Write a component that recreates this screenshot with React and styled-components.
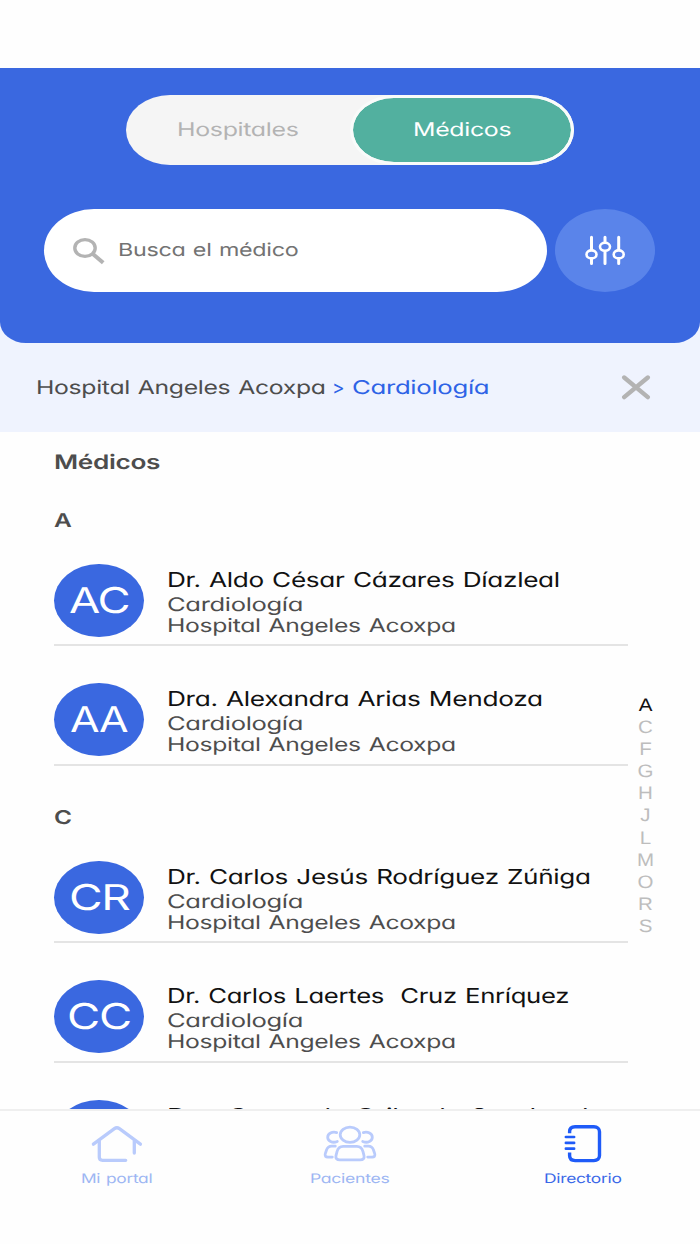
import React, { useLayoutEffect, useRef, useState } from 'react';
import styled, { createGlobalStyle } from 'styled-components';

const sections = [
	{
		letter: 'A',
		doctors: [
			{ initials: 'AC', iw: 60, name: 'Dr. Aldo César Cázares Díazleal', width: 393 },
			{ initials: 'AA', iw: 58, name: 'Dra. Alexandra Arias Mendoza', width: 376 },
		],
	},
	{
		letter: 'C',
		doctors: [
			{ initials: 'CR', iw: 61, name: 'Dr. Carlos Jesús Rodríguez Zúñiga', width: 424 },
			{ initials: 'CC', iw: 64, name: 'Dr. Carlos Laertes\u00a0 Cruz Enríquez', width: 402 },
			{ initials: 'CO', iw: 64, name: 'Dra. Consuelo Orihuela Sandoval', width: 421 },
		],
	},
];

const letters = ['A', 'C', 'F', 'G', 'H', 'J', 'L', 'M', 'O', 'R', 'S'];

// Stretches one line of text so that it fills the given width
function Fit({ width, children }) {
	const ref = useRef(null);
	const [scale, setScale] = useState(1);

	useLayoutEffect(() => {
		setScale(width / ref.current.offsetWidth);
	}, [width, children]);

	return (
		<FitBox style={{ width }}>
			<FitText ref={ref} style={{ transform: `scaleX(${scale})` }}>
				{children}
			</FitText>
		</FitBox>
	);
}

function SearchIcon() {
	return (
		<svg width='34' height='28' viewBox='72 236 34 28' fill='none' stroke='#b3b3b3'>
			<ellipse cx='85' cy='247' rx='10.2' ry='8.4' strokeWidth='3.4' />
			<path d='M92.6 252.8l10.6 8.9' strokeWidth='4' />
		</svg>
	);
}

function SlidersIcon() {
	return (
		<svg width='44' height='32' viewBox='583.2 234.2 44 32' fill='none' stroke='#fff' strokeWidth='3' strokeLinecap='round'>
			<path d='M591.7 237.4v12M591.7 259.4v4.4M605.2 237.4v4.4M605.2 252v11.8M618.9 237.4v12M618.9 259.4v4.4' />
			<ellipse cx='591.7' cy='254.6' rx='5' ry='4' strokeWidth='2.6' />
			<ellipse cx='605.2' cy='247' rx='5' ry='4' strokeWidth='2.6' />
			<ellipse cx='618.9' cy='254.6' rx='5' ry='4' strokeWidth='2.6' />
		</svg>
	);
}

function CloseIcon() {
	return (
		<svg width='30' height='26' viewBox='0 0.7 30 26' stroke='#b3b3b3' strokeWidth='4.4' strokeLinecap='round'>
			<path d='M3.2 3.2l23.6 19.6M26.8 3.2L3.2 22.8' />
		</svg>
	);
}

function HomeIcon() {
	return (
		<svg width='54' height='40' viewBox='90 1124 54 40' fill='none' stroke='#b9cbfc' strokeWidth='3.3' strokeLinecap='round' strokeLinejoin='round'>
			<path d='M93.4 1144.2l21-15.5q2.5-1.8 5 0l21 15.5' />
			<path d='M99.3 1141v16.3q0 3 3.2 3h23.2M134.3 1141v12' />
		</svg>
	);
}

function PeopleIcon() {
	return (
		<svg width='58' height='40' viewBox='321.3 1124 58 40' fill='none' stroke='#b9cbfc' strokeWidth='2.8' strokeLinecap='round'>
			<ellipse cx='350.3' cy='1134.8' rx='9.8' ry='7.6' />
			<path d='M343.5 1146.4h13.6c4 0 5.4 2.4 6.2 5.2l1 4c.6 2.6-.8 4.3-3.8 4.3h-20.4c-3 0-4.4-1.7-3.8-4.3l1-4c.8-2.8 2.2-5.2 6.2-5.2z' />
			<path d='M337 1132.6c-4.5-1.4-9 1-9 4.7s4.5 6.2 9.6 4.2M363.6 1132.6c4.5-1.4 9 1 9 4.7s-4.5 6.2-9.6 4.2' />
			<path d='M335.6 1146.2h-3.6c-3 0-4.4 1.6-5.2 3.8l-1.2 3.6c-.8 2.4.4 3.5 2.6 3.5h4.4M365 1146.2h3.6c3 0 4.4 1.6 5.2 3.8l1.2 3.6c.8 2.4-.4 3.5-2.6 3.5h-4.4' />
		</svg>
	);
}

function DirectoryIcon() {
	return (
		<svg width='40' height='40' viewBox='562.6 1123.7 40 40' fill='none' stroke='#1f5bf8'>
			<path d='M569.2 1133v-1.5c0-3 2-5 5.5-5h18.8c3.5 0 5.6 2 5.6 5v23.8c0 3-2.1 5-5.6 5h-18.8c-3.5 0-5.5-2-5.5-5v-3.1' strokeWidth='3.4' />
			<path d='M565.5 1136.7h8.2M565.5 1142.6h8.2M565.5 1148.4h8.2' strokeWidth='2.7' strokeLinecap='round' />
		</svg>
	);
}

function Doctor({ doctor }) {
	return (
		<Row>
			<Avatar>
				<Fit width={doctor.iw}>{doctor.initials}</Fit>
			</Avatar>
			<Details>
				<Name>
					<Fit width={doctor.width}>{doctor.name}</Fit>
				</Name>
				<Info>
					<Fit width={136}>Cardiología</Fit>
				</Info>
				<Info>
					<Fit width={289}>Hospital Angeles Acoxpa</Fit>
				</Info>
			</Details>
		</Row>
	);
}

function App() {
	return (
		<Screen>
			<GlobalStyle />
			<Top>
				<Header>
					<Toggle>
						<Option>
							<Fit width={122}>Hospitales</Fit>
						</Option>
						<Option $active>
							<Fit width={98}>Médicos</Fit>
						</Option>
					</Toggle>
					<SearchRow>
						<SearchBox>
							<SearchIcon />
							<Fit width={180}>Busca el médico</Fit>
						</SearchBox>
						<FilterButton>
							<SlidersIcon />
						</FilterButton>
					</SearchRow>
				</Header>
				<Breadcrumb>
					<Crumb>
						<Fit width={289}>Hospital Angeles Acoxpa</Fit>
					</Crumb>
					<Crumb $active>
						<Fit width={12}>&gt;</Fit>
					</Crumb>
					<Crumb $active>
						<Fit width={137}>Cardiología</Fit>
					</Crumb>
					<Close>
						<CloseIcon />
					</Close>
				</Breadcrumb>
			</Top>
			<Content>
				<List>
					<Title>
						<Fit width={106}>Médicos</Fit>
					</Title>
					{sections.map((section) => (
						<section key={section.letter}>
							<Letter>
								<Fit width={18}>{section.letter}</Fit>
							</Letter>
							{section.doctors.map((doctor) => (
								<Doctor key={doctor.name} doctor={doctor} />
							))}
						</section>
					))}
				</List>
				<Index>
					{letters.map((letter) => (
						<IndexLetter key={letter} $active={letter === 'A'}>
							{letter}
						</IndexLetter>
					))}
				</Index>
			</Content>
			<Nav>
				<NavItem>
					<HomeIcon />
					<Fit width={71}>Mi portal</Fit>
				</NavItem>
				<NavItem>
					<PeopleIcon />
					<Fit width={79}>Pacientes</Fit>
				</NavItem>
				<NavItem $active>
					<DirectoryIcon />
					<Fit width={78}>Directorio</Fit>
				</NavItem>
			</Nav>
		</Screen>
	);
}

const GlobalStyle = createGlobalStyle`
	* {
		box-sizing: border-box;
	}

	body {
		margin: 0;
		background: #fefefe;
		font-family: Inter, 'Open Sans', sans-serif;
		font-feature-settings: 'cv11' 1;
		letter-spacing: -0.015em;
		word-spacing: 0.06em;
		text-rendering: geometricPrecision;
	}

	svg {
		display: block;
		flex: none;
	}
`;

const FitBox = styled.span`
	display: block;
	flex: none;
	white-space: nowrap;
`;

const FitText = styled.span`
	display: inline-block;
	vertical-align: top;
	transform-origin: left center;
`;

const Screen = styled.div`
	display: flex;
	flex-direction: column;
	width: 700px;
	height: 1244px;
	padding-top: 68px;
	overflow: hidden;
`;

const Top = styled.div`
	flex: none;
	height: 364px;
	background: #eff3fe;
`;

const Header = styled.header`
	height: 275.4px;
	padding: 26.6px 44.4px 0;
	background: #3a68e0;
	border-radius: 0 0 26px 26px / 0 0 21px 21px;
`;

const Toggle = styled.div`
	display: flex;
	width: 448px;
	height: 70.4px;
	margin: 0 auto;
	background: #f5f5f5;
	border-radius: 44px / 35px;
`;

const Option = styled.div`
	display: flex;
	align-items: center;
	justify-content: center;
	width: 224px;
	font-size: 18.8px;
	color: ${(props) => (props.$active ? '#fff' : '#b3b3b3')};
	background: ${(props) => (props.$active ? '#52b09f' : 'none')};
	background-clip: padding-box;
	border: 3px solid ${(props) => (props.$active ? '#f9fbfa' : 'transparent')};
	border-radius: 44px / 35px;
`;

const SearchRow = styled.div`
	display: flex;
	gap: 8px;
	margin-top: 44px;
`;

const SearchBox = styled.div`
	display: flex;
	align-items: center;
	gap: 12px;
	width: 502.5px;
	height: 83px;
	padding: 1px 0 0 27.6px;
	font-size: 18px;
	color: #737373;
	background: #fff;
	border-radius: 50px / 41.5px;
`;

const FilterButton = styled.div`
	display: flex;
	align-items: center;
	justify-content: center;
	width: 100.5px;
	height: 83px;
	background: #5a84ea;
	border-radius: 50%;
`;

const Breadcrumb = styled.div`
	display: flex;
	align-items: center;
	height: 88.6px;
	padding: 0 49px 0 35.5px;
	font-size: 19px;
`;

const Crumb = styled.span`
	margin-right: 7.6px;
	color: ${(props) => (props.$active ? '#2e63e6' : '#4d4d4d')};
`;

const Close = styled.div`
	margin-left: auto;
`;

const Content = styled.main`
	display: flex;
	flex: 1;
	min-height: 0;
	padding-left: 54px;
	overflow: hidden;
`;

const List = styled.div`
	width: 574px;
`;

const Title = styled.h1`
	margin: 0;
	padding-top: 22.5px;
	font-size: 20px;
	font-weight: 600;
	line-height: 14px;
	color: #4d4d4d;
`;

const Letter = styled.h2`
	margin: 0;
	padding-top: 45px;
	font-size: 19px;
	font-weight: 600;
	line-height: 13px;
	color: #4d4d4d;
`;

const Row = styled.div`
	display: flex;
	height: 119.5px;
	padding-top: 37px;
	border-bottom: 2px solid #e4e4e4;
`;

const Avatar = styled.div`
	display: flex;
	align-items: center;
	justify-content: center;
	width: 90px;
	height: 73.4px;
	font-size: 35.5px;
	letter-spacing: -1px;
	color: #fff;
	background: #3a68e0;
	border-radius: 50%;
`;

const Details = styled.div`
	padding: 2px 0 0 22.5px;
`;

const Name = styled.div`
	font-size: 20.5px;
	line-height: 28px;
	color: #111;
`;

const Info = styled.div`
	font-size: 18.8px;
	line-height: 21.4px;
	color: #4d4d4d;
`;

const Index = styled.div`
	width: 35px;
	padding-top: 262px;
	text-align: center;
`;

const IndexLetter = styled.div`
	font-family: 'Liberation Sans', sans-serif;
	font-size: 18px;
	line-height: 22.1px;
	letter-spacing: 0;
	color: ${(props) => (props.$active ? '#111' : '#bdbdbd')};
	transform: scaleX(1.14);
`;

const Nav = styled.nav`
	display: grid;
	grid-template-columns: repeat(3, 233.3px);
	flex: none;
	height: 135px;
	border-top: 2px solid #efefef;
`;

const NavItem = styled.div`
	display: flex;
	flex-direction: column;
	align-items: center;
	gap: 6px;
	padding-top: 13px;
	font-size: 13.2px;
	line-height: 18px;
	color: ${(props) => (props.$active ? '#3a68e8' : '#9db6f3')};
`;

export default App;
